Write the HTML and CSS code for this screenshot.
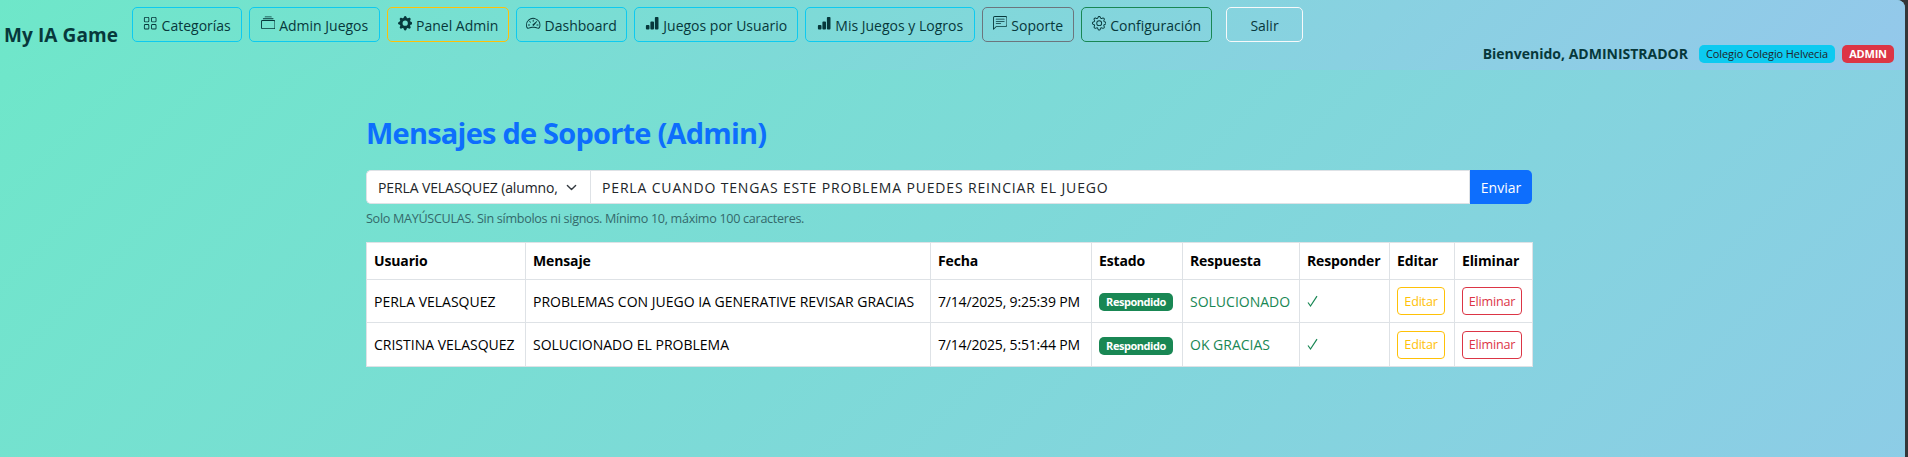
FILE: index.html
```html
<!DOCTYPE html>
<html lang="es">
<head>
<meta charset="utf-8">
<title>My IA Game</title>
<link rel="stylesheet" href="styles.css">
</head>
<body>
<div class="page">
  <header class="navbar">
    <div class="brand">My IA Game</div>
    <nav class="menu">
      <a class="btn info w-cat"><svg class="icon" viewBox="0 0 16 16"><path d="M1 2.500A1.500 1.500 0 0 1 2.500 1h3A1.500 1.500 0 0 1 7 2.500v3A1.500 1.500 0 0 1 5.500 7h-3A1.500 1.500 0 0 1 1 5.500zM2.500 2a.5.5 0 0 0-.5.5v3a.5.5 0 0 0 .5.5h3a.5.5 0 0 0 .5-.5v-3a.5.5 0 0 0-.5-.5zm6.500.5A1.500 1.500 0 0 1 10.500 1h3A1.500 1.500 0 0 1 15 2.500v3A1.500 1.500 0 0 1 13.500 7h-3A1.500 1.500 0 0 1 9 5.500zm1.500-.5a.5.5 0 0 0-.5.5v3a.5.5 0 0 0 .5.5h3a.5.5 0 0 0 .5-.5v-3a.5.5 0 0 0-.5-.5zM1 10.500A1.500 1.500 0 0 1 2.500 9h3A1.500 1.500 0 0 1 7 10.500v3A1.500 1.500 0 0 1 5.500 15h-3A1.500 1.500 0 0 1 1 13.500zm1.500-.5a.5.5 0 0 0-.5.5v3a.5.5 0 0 0 .5.5h3a.5.5 0 0 0 .5-.5v-3a.5.5 0 0 0-.5-.5zm6.500.5A1.500 1.500 0 0 1 10.500 9h3a1.500 1.500 0 0 1 1.500 1.500v3a1.500 1.500 0 0 1-1.500 1.500h-3A1.500 1.500 0 0 1 9 13.500zm1.500-.5a.5.5 0 0 0-.5.5v3a.5.5 0 0 0 .5.5h3a.5.5 0 0 0 .5-.5v-3a.5.5 0 0 0-.5-.5z"/></svg><span>Categorías</span></a>
      <a class="btn info w-adm"><svg class="icon" viewBox="0 0 16 16"><path d="M2.500 3.500a.5.5 0 0 1 0-1h11a.5.5 0 0 1 0 1zm2-2a.5.5 0 0 1 0-1h7a.5.5 0 0 1 0 1zM0 13a1.500 1.500 0 0 0 1.500 1.500h13A1.500 1.500 0 0 0 16 13V6a1.500 1.500 0 0 0-1.500-1.500h-13A1.500 1.500 0 0 0 0 6zm1.500.5A.5.5 0 0 1 1 13V6a.5.5 0 0 1 .5-.5h13a.5.5 0 0 1 .5.5v7a.5.5 0 0 1-.5.5z"/></svg><span>Admin Juegos</span></a>
      <a class="btn warning w-pan"><svg class="icon" viewBox="0 0 16 16"><path d="M9.405 1.050c-.413-1.400-2.397-1.400-2.810 0l-.1.340a1.464 1.464 0 0 1-2.105.872l-.310-.170c-1.283-.698-2.686.705-1.987 1.987l.169.311c.446.820.023 1.841-.872 2.105l-.340.100c-1.400.413-1.400 2.397 0 2.810l.340.100a1.464 1.464 0 0 1 .872 2.105l-.170.310c-.698 1.283.705 2.686 1.987 1.987l.311-.169a1.464 1.464 0 0 1 2.105.872l.100.340c.413 1.400 2.397 1.400 2.810 0l.100-.340a1.464 1.464 0 0 1 2.105-.872l.310.170c1.283.698 2.686-.705 1.987-1.987l-.169-.311a1.464 1.464 0 0 1 .872-2.105l.340-.100c1.400-.413 1.400-2.397 0-2.810l-.340-.100a1.464 1.464 0 0 1-.872-2.105l.170-.310c.698-1.283-.705-2.686-1.987-1.987l-.311.169a1.464 1.464 0 0 1-2.105-.872zM8 10.930a2.929 2.929 0 1 1 0-5.860 2.929 2.929 0 0 1 0 5.858z"/></svg><span>Panel Admin</span></a>
      <a class="btn info w-das"><svg class="icon" viewBox="0 0 16 16"><path d="M8 4a.5.5 0 0 1 .5.5V6a.5.5 0 0 1-1 0V4.500A.5.5 0 0 1 8 4M3.732 5.732a.5.5 0 0 1 .707 0l.915.914a.5.5 0 1 1-.708.708l-.914-.915a.5.5 0 0 1 0-.707M2 10a.5.5 0 0 1 .5-.5h1.586a.5.5 0 0 1 0 1H2.500A.5.5 0 0 1 2 10m9.500 0a.5.5 0 0 1 .5-.5h1.500a.5.5 0 0 1 0 1H12a.5.5 0 0 1-.5-.5m.754-4.246a.389.389 0 0 0-.527-.020L7.547 9.310a.910.910 0 1 0 1.302 1.258l3.434-4.297a.389.389 0 0 0-.029-.518z"/><path fill-rule="evenodd" d="M0 10a8 8 0 1 1 15.547 2.661c-.442 1.253-1.845 1.602-2.932 1.250C11.309 13.488 9.475 13 8 13c-1.474 0-3.310.488-4.615.911-1.087.352-2.490.003-2.932-1.250A8 8 0 0 1 0 10m8-7a7 7 0 0 0-6.603 9.329c.203.575.923.876 1.680.630C4.397 12.533 6.358 12 8 12s3.604.532 4.923.960c.757.245 1.477-.056 1.680-.631A7 7 0 0 0 8 3"/></svg><span>Dashboard</span></a>
      <a class="btn info w-jue"><svg class="icon" viewBox="0 0 16 16"><path d="M1 11a1 1 0 0 1 1-1h2a1 1 0 0 1 1 1v3a1 1 0 0 1-1 1H2a1 1 0 0 1-1-1zm5-4a1 1 0 0 1 1-1h2a1 1 0 0 1 1 1v7a1 1 0 0 1-1 1H7a1 1 0 0 1-1-1zm5-5a1 1 0 0 1 1-1h2a1 1 0 0 1 1 1v12a1 1 0 0 1-1 1h-2a1 1 0 0 1-1-1z"/></svg><span>Juegos por Usuario</span></a>
      <a class="btn info w-mis"><svg class="icon" viewBox="0 0 16 16"><path d="M1 11a1 1 0 0 1 1-1h2a1 1 0 0 1 1 1v3a1 1 0 0 1-1 1H2a1 1 0 0 1-1-1zm5-4a1 1 0 0 1 1-1h2a1 1 0 0 1 1 1v7a1 1 0 0 1-1 1H7a1 1 0 0 1-1-1zm5-5a1 1 0 0 1 1-1h2a1 1 0 0 1 1 1v12a1 1 0 0 1-1 1h-2a1 1 0 0 1-1-1z"/></svg><span>Mis Juegos y Logros</span></a>
      <a class="btn secondary w-sop"><svg class="icon" viewBox="0 0 16 16"><path d="M14 1a1 1 0 0 1 1 1v8a1 1 0 0 1-1 1H4.414A2 2 0 0 0 3 11.586l-2 2V2a1 1 0 0 1 1-1zM2 0a2 2 0 0 0-2 2v12.793a.5.5 0 0 0 .854.353l2.853-2.853A1 1 0 0 1 4.414 12H14a2 2 0 0 0 2-2V2a2 2 0 0 0-2-2z"/><path d="M3 3.500a.5.5 0 0 1 .5-.5h9a.5.5 0 0 1 0 1h-9a.5.5 0 0 1-.5-.5M3 6a.5.5 0 0 1 .5-.5h9a.5.5 0 0 1 0 1h-9A.5.5 0 0 1 3 6m0 2.500a.5.5 0 0 1 .5-.5h5a.5.5 0 0 1 0 1h-5a.5.5 0 0 1-.5-.5"/></svg><span>Soporte</span></a>
      <a class="btn success w-con"><svg class="icon" viewBox="0 0 16 16"><path d="M8 4.754a3.246 3.246 0 1 0 0 6.492 3.246 3.246 0 0 0 0-6.492M5.754 8a2.246 2.246 0 1 1 4.492 0 2.246 2.246 0 0 1-4.492 0"/><path d="M9.796 1.343c-.527-1.790-3.065-1.790-3.592 0l-.094.319a.873.873 0 0 1-1.255.520l-.292-.160c-1.640-.892-3.433.902-2.540 2.541l.159.292a.873.873 0 0 1-.520 1.255l-.319.094c-1.790.527-1.790 3.065 0 3.592l.319.094a.873.873 0 0 1 .520 1.255l-.160.292c-.892 1.640.901 3.434 2.541 2.540l.292-.159a.873.873 0 0 1 1.255.520l.094.319c.527 1.790 3.065 1.790 3.592 0l.094-.319a.873.873 0 0 1 1.255-.520l.292.160c1.640.893 3.434-.902 2.540-2.541l-.159-.292a.873.873 0 0 1 .520-1.255l.319-.094c1.790-.527 1.790-3.065 0-3.592l-.319-.094a.873.873 0 0 1-.520-1.255l.160-.292c.893-1.640-.902-3.433-2.541-2.540l-.292.159a.873.873 0 0 1-1.255-.520zm-2.633.283c.246-.835 1.428-.835 1.674 0l.094.319a1.873 1.873 0 0 0 2.693 1.115l.291-.160c.764-.415 1.600.420 1.184 1.185l-.159.292a1.873 1.873 0 0 0 1.116 2.692l.318.094c.835.246.835 1.428 0 1.674l-.319.094a1.873 1.873 0 0 0-1.115 2.693l.160.291c.415.764-.420 1.600-1.185 1.184l-.291-.159a1.873 1.873 0 0 0-2.693 1.116l-.094.318c-.246.835-1.428.835-1.674 0l-.094-.319a1.873 1.873 0 0 0-2.692-1.115l-.292.160c-.764.415-1.600-.420-1.184-1.185l.159-.291A1.873 1.873 0 0 0 1.945 8.930l-.319-.094c-.835-.246-.835-1.428 0-1.674l.319-.094A1.873 1.873 0 0 0 3.060 4.377l-.160-.292c-.415-.764.420-1.600 1.185-1.184l.292.159a1.873 1.873 0 0 0 2.692-1.115z"/></svg><span>Configuración</span></a>
      <a class="btn light w-sal"><span>Salir</span></a>
    </nav>
    <div class="user">
      <strong class="welcome">Bienvenido, ADMINISTRADOR</strong>
      <span class="badge school">Colegio Colegio Helvecia</span>
      <span class="badge role">ADMIN</span>
    </div>
  </header>
  <main class="content">
    <h2 class="title"><span>Mensajes de Soporte (Admin)</span></h2>
    <div class="group">
      <div class="select"><span class="picked">PERLA VELASQUEZ (alumno,</span><svg class="caret" viewBox="0 0 16 16"><path d="m2 5 6 6 6-6"/></svg></div>
      <div class="field"><span>PERLA CUANDO TENGAS ESTE PROBLEMA PUEDES REINCIAR EL JUEGO</span></div>
      <div class="send"><span>Enviar</span></div>
    </div>
    <div class="hint"><span>Solo MAYÚSCULAS. Sin símbolos ni signos. Mínimo 10, máximo 100 caracteres.</span></div>
    <table class="table">
      <colgroup><col class="c1"><col class="c2"><col class="c3"><col class="c4"><col class="c5"><col class="c6"><col class="c7"><col class="c8"></colgroup>
      <thead><tr class="head"><th>Usuario</th><th>Mensaje</th><th>Fecha</th><th>Estado</th><th>Respuesta</th><th>Responder</th><th>Editar</th><th>Eliminar</th></tr></thead>
      <tbody>
        <tr class="first"><td class="name">PERLA VELASQUEZ</td><td class="msg">PROBLEMAS CON JUEGO IA GENERATIVE REVISAR GRACIAS</td><td class="date">7/14/2025, 9:25:39 PM</td><td><span class="badge done">Respondido</span></td><td class="reply">SOLUCIONADO</td><td class="reply"><svg class="check" viewBox="0 0 11 13"><path d="M1 7.500 3.500 11 10 1.200"/></svg></td><td><a class="small edit">Editar</a></td><td><a class="small delete">Eliminar</a></td></tr>
        <tr class="second"><td class="name">CRISTINA VELASQUEZ</td><td class="msg">SOLUCIONADO EL PROBLEMA</td><td class="date">7/14/2025, 5:51:44 PM</td><td><span class="badge done">Respondido</span></td><td class="reply">OK GRACIAS</td><td class="reply"><svg class="check" viewBox="0 0 11 13"><path d="M1 7.500 3.500 11 10 1.200"/></svg></td><td><a class="small edit">Editar</a></td><td><a class="small delete">Eliminar</a></td></tr>
      </tbody>
    </table>
  </main>
</div>
</body>
</html>
```
FILE: styles.css
```css
* { box-sizing: border-box; }
body {
  margin: 0;
  background: #343638;
  font: 14px/21px "Open Sans", "Noto Sans", sans-serif;
  color: #07383b;
  overflow: hidden;
}
.page {
  width: 1905px;
  height: 457px;
  border-top-right-radius: 8px;
  overflow: hidden;
  background: linear-gradient(135deg, #6ee7c9, #93c7ec) 0 0 / 1905px 940px no-repeat;
}
.navbar {
  display: flex;
  height: 70px;
  background: linear-gradient(135deg, #6ee7c9, #94c8eb);
}
.brand {
  width: 128px;
  padding: 22px 0 0 4px;
  font-size: 19px;
  line-height: 26px;
  font-weight: 700;
  letter-spacing: 0.100px;
  white-space: nowrap;
}
.menu { display: flex; gap: 7px; padding: 7px 0 0 4px; }
.btn {
  display: flex;
  align-items: center;
  justify-content: center;
  gap: 4px;
  height: 35px;
  border: 1px solid;
  border-radius: 5px;
  white-space: nowrap;
}
.btn span { color: #07383b; padding-top: 1px; }
.icon { width: 14.400px; height: 14.400px; fill: #07383b; margin-top: -2px; flex: none; }
.info { border-color: #0dcaf0; }
.warning { border-color: #ffc107; }
.secondary { border-color: #6c757d; }
.success { border-color: #198754; }
.light { border-color: #f8f9fa; margin-left: 7px; }
.w-cat { width: 110px; }
.w-adm { width: 131px; }
.w-pan { width: 122px; }
.w-das { width: 111px; }
.w-jue { width: 164px; }
.w-mis { width: 170px; }
.w-sop { width: 92px; }
.w-con { width: 131px; }
.w-sal { width: 77px; }
.user { display: flex; flex: 1; justify-content: flex-end; padding: 45px 11px 0 0; white-space: nowrap; }
.welcome { line-height: 17px; margin-right: 11px; }
.badge {
  display: inline-flex;
  align-items: center;
  justify-content: center;
  height: 18px;
  border-radius: 5px;
  color: #fff;
  font-size: 11px;
  line-height: 18px;
  font-weight: 700;
  letter-spacing: -0.2px;
}
.school { width: 136px; margin-right: 7px; background: #0dcaf0; color: #212529; font-weight: 400; letter-spacing: -0.100px; }
.role { width: 52px; background: #dc3545; }
.content { width: 1166px; margin-left: 366px; padding-top: 45px; }
.title { margin: 0; height: 55px; color: #0d6efd; font-size: 29px; line-height: 35px; font-weight: 700; letter-spacing: -0.780px; white-space: nowrap; }
.group { display: flex; height: 34px; white-space: nowrap; color: #212529; }
.select {
  display: flex;
  align-items: center;
  justify-content: space-between;
  width: 224px;
  padding: 0 13px 0 11px;
  background: #fff;
  border: 1px solid #dee2e6;
  border-right: 0;
  border-radius: 5px 0 0 5px;
}
.picked { letter-spacing: -0.120px; }
.caret { width: 11px; height: 11px; fill: none; stroke: #343a40; stroke-width: 2; stroke-linecap: round; stroke-linejoin: round; }
.field { display: flex; align-items: center; width: 880px; padding-left: 11px; background: #fff; border: 1px solid #dee2e6; letter-spacing: 0.840px; }
.send { display: flex; align-items: center; justify-content: center; width: 62px; background: #0d6efd; color: #fff; border-radius: 0 5px 5px 0; }
.hint { height: 37px; padding-top: 5px; font-size: 12.600px; line-height: 19px; letter-spacing: -0.300px; color: #34696b; white-space: nowrap; }
.table { width: 1166px; table-layout: fixed; border-collapse: collapse; background: #fff; color: #000; margin-top: 1px; }
.table th, .table td { border: 1px solid #dee2e6; padding: 0 7px; text-align: left; vertical-align: middle; white-space: nowrap; letter-spacing: 0; }
.table th { padding-bottom: 2px; letter-spacing: -0.140px; }
.table .date { letter-spacing: -0.180px; }
.head { height: 37px; }
.first { height: 43px; }
.second { height: 44px; }
.c1 { width: 159px; }
.c2 { width: 405px; }
.c3 { width: 161px; }
.c4 { width: 91px; }
.c5 { width: 117px; }
.c6 { width: 90px; }
.c7 { width: 65px; }
.c8 { width: 78px; }
.table .reply { color: #198754; }
.check { display: block; width: 11px; height: 13px; fill: none; stroke: #198754; stroke-width: 1.200; }
.done { display: flex; width: 74px; margin-top: 2px; background: #198754; letter-spacing: -0.450px; }
.small { display: flex; align-items: center; justify-content: center; height: 28px; border: 1px solid; border-radius: 4px; font-size: 12.600px; letter-spacing: -0.200px; }
.edit { width: 48px; color: #ffc107; }
.delete { width: 60px; color: #dc3545; }
```
